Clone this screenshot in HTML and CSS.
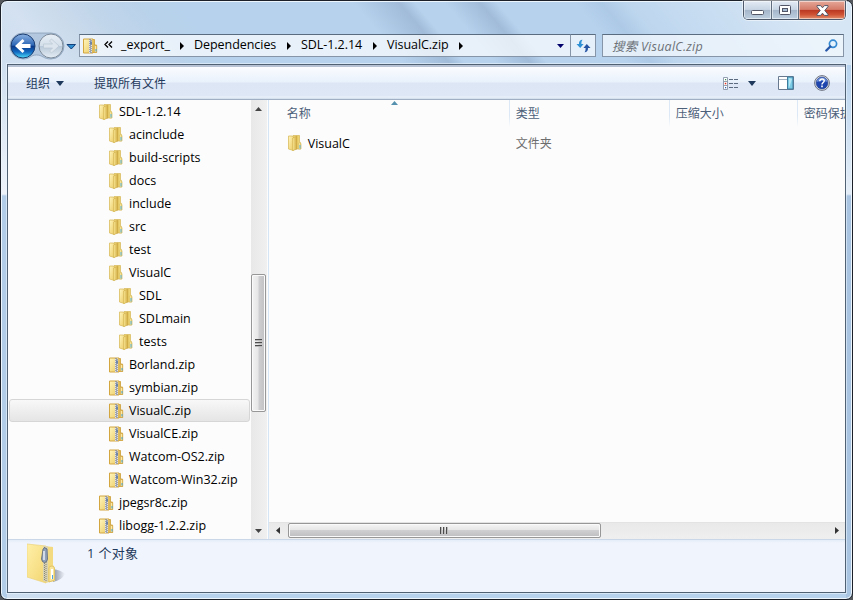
FILE: index.html
```html
<!DOCTYPE html>
<html lang="zh-CN">
<head>
  <meta charset="UTF-8">
  <meta name="viewport" content="width=device-width, initial-scale=1.0">
  <title>VisualC.zip</title>
  <link rel="stylesheet" href="styles.css">
</head>
<body>
  <!-- Shared icons -->
  <svg class="defs" width="0" height="0">
    <defs>
      <linearGradient id="gold" x1="0" y1="0" x2="1" y2="1">
        <stop offset="0" stop-color="#fff6bd"/>
        <stop offset="1" stop-color="#ecca62"/>
      </linearGradient>
      <linearGradient id="goldDark" x1="0" y1="0" x2="1" y2="0">
        <stop offset="0" stop-color="#fae793"/>
        <stop offset="1" stop-color="#cfa942"/>
      </linearGradient>
      <linearGradient id="blueBall" x1="0" y1="0" x2="0" y2="1">
        <stop offset="0" stop-color="#8bb2e2"/>
        <stop offset="0.47" stop-color="#2c66b5"/>
        <stop offset="0.5" stop-color="#0a3686"/>
        <stop offset="0.75" stop-color="#126bc2"/>
        <stop offset="1" stop-color="#4fe0fa"/>
      </linearGradient>
      <linearGradient id="grayBall" x1="0" y1="0" x2="0" y2="1">
        <stop offset="0" stop-color="#e9eff6"/>
        <stop offset="0.48" stop-color="#d3dfea"/>
        <stop offset="0.5" stop-color="#b8c8d8"/>
        <stop offset="1" stop-color="#e4edf5"/>
      </linearGradient>
    </defs>
    <symbol id="folder" viewBox="0 0 15 16">
      <path d="M5 .5h6.500v7l1.500 1v5.500H5z" fill="#eed373" stroke="#d6b75a" stroke-width=".7"/>
      <path d="M.5 1H4l1.500 1v13.500L.5 14z" fill="url(#gold)" stroke="#d9bc60" stroke-width=".8"/>
      <path d="M4.500 3L9 1v13l-4.500 1.700z" fill="url(#goldDark)" stroke="#c9a640" stroke-width=".5"/>
      <path d="M10.500 8l2-.7v6.700h-2z" fill="#f5e397" stroke="#d9bd62" stroke-width=".6"/>
      <path d="M11.500 10h1v3.500h-1z" fill="#54b4e6"/>
    </symbol>
    <symbol id="zip" viewBox="0 0 15 16">
      <path d="M8 1.500h3.500V7h2v7.500H8z" fill="#efd476" stroke="#c99b34" stroke-width=".8"/>
      <path d="M.5 1H10v14H.5z" fill="url(#gold)" stroke="#d3a640"/>
      <path d="M6 1.500h3V15H6z" fill="#dfe1e6"/>
      <path d="M7 1v14" stroke="#5c6474" stroke-width="1" stroke-dasharray="1 1"/>
      <path d="M8 2v13" stroke="#5c6474" stroke-width="1" stroke-dasharray="1 1"/>
      <path d="M7 3.500h2v3H7z" fill="#6e86a8"/>
      <path d="M11.300 7.500h2.400v7h-2.400z" fill="#fae9a7" stroke="#d1a544" stroke-width=".8"/>
      <path d="M12.500 11h1v2.500h-1z" fill="#3fa0d8"/>
    </symbol>
  </svg>

  <div class="window">
    <div class="titlebar">
      <div class="controls">
        <button class="control"><svg width="13" height="5"><rect x=".5" y=".5" width="12" height="4" rx="1" fill="#fff" stroke="#535666"/></svg></button>
        <button class="control control-max"><svg width="13" height="11"><rect x=".5" y=".5" width="11" height="9" rx="1" fill="#fff" stroke="#535666"/><rect x="3.500" y="3.500" width="5" height="3" fill="#a5bad3" stroke="#535666"/></svg></button>
        <button class="control control-close"><svg width="13" height="11" viewBox="0 0 13 11"><path d="M1 .6h3.600L6.500 2.800 8.400.6H12v1L8.800 5.500 12 9.400v1H8.400L6.500 8.200 4.600 10.400H1v-1L4.200 5.500 1 1.600z" fill="#fff" stroke="#535666"/></svg></button>
      </div>
    </div>

    <div class="nav">
      <svg class="travel" width="70" height="28" viewBox="0 0 70 28">
        <path d="M14 1h28a13 13 0 0 1 0 26c-8 0-8-4-14.500-4S22 27 14 27A13 13 0 0 1 14 1z" fill="#b3c8de" stroke="#8299b2" stroke-opacity=".7"/>
        <circle cx="14" cy="14" r="12" fill="url(#blueBall)" stroke="#1c3d71"/>
        <path d="M6 14L13.500 7l2 2-3 3H21.500v4H12.500l3 3-2 2z" fill="#fff"/>
        <circle cx="42" cy="14" r="12" fill="url(#grayBall)" stroke="#7d8a9a"/>
        <path d="M50 14L42.500 7l-2 2 3 3H34.500v4H43.500l-3 3 2 2z" fill="#dce5ee" stroke="#b9c6d3" stroke-width=".7"/>
        <path d="M58 12.500h8.500l-4.200 4.500z" fill="#2e8ed0" stroke="#16407a"/>
      </svg>
      <div class="address">
        <svg class="address-icon" width="15" height="16"><use href="#zip"/></svg>
        <svg class="chevrons" width="9" height="7" viewBox="0 0 9 7"><path d="M4 .5l-3 3 3 3M8 .5l-3 3 3 3" fill="none" stroke="#000" stroke-width="1.300"/></svg>
        <span class="crumb crumb-export">_export_</span>
        <span class="crumb crumb-deps">Dependencies</span>
        <span class="crumb crumb-sdl">SDL-1.2.14</span>
        <span class="crumb crumb-zip">VisualC.zip</span>
        <svg class="address-drop" width="7" height="4"><path d="M0 0h7L3.500 4z" fill="#00006b"/></svg>
      </div>
      <div class="refresh">
        <svg width="15" height="14" viewBox="0 0 15 14"><path d="M6.500 .7C4 .8 2.800 2.500 3 5H.5L4.200 9 7.600 5H5.400C5.400 3 5.600 1.900 6.500.7z" fill="#2f91d5"/><path d="M8.500 13.300c2.500-.1 3.700-1.800 3.500-4.300h2.500L10.800 5 7.400 9h2.200c0 2-.2 3.100-1.100 4.300z" fill="#2755a4"/></svg>
      </div>
      <div class="search">
        <span>搜索 VisualC.zip</span>
        <svg width="13" height="13" viewBox="0 0 13 13"><circle cx="8" cy="4.800" r="3.600" fill="#e4f3fd" stroke="#3489d0" stroke-width="1.700"/><path d="M5.300 7.500L1.300 11.500" stroke="#2858a8" stroke-width="2.300" stroke-linecap="round"/></svg>
      </div>
    </div>

    <div class="client">
      <div class="toolbar">
        <span class="tool-organize">组织</span>
        <svg class="tool-arrow" width="8" height="5"><path d="M0 0h8L4 5z" fill="#1e395b"/></svg>
        <span class="tool-extract">提取所有文件</span>
        <div class="tool-icons">
          <svg class="icon-view" width="15" height="13" viewBox="0 0 15 13">
            <path d="M.5 .5h4v12h-4zM.5 4.500h4M.5 8.500h4" fill="#fff" stroke="#8996a8" stroke-width=".9"/>
            <path d="M2 2h1.200v1.200H2z" fill="#3b8a58"/><path d="M1.800 5.800h1.500v1.500H1.800z" fill="#e02d1d"/><path d="M2 10h1.200v1.200H2z" fill="#2c5eb0"/>
            <path d="M6 2.500h4M11 2.500h4M6 6.500h4M11 6.500h4M6 10.500h4M11 10.500h4" stroke="#5d6b80"/>
          </svg>
          <svg class="icon-view-arrow" width="8" height="5"><path d="M0 0h8L4 5z" fill="#1e395b"/></svg>
          <svg class="icon-preview" width="16" height="14" viewBox="0 0 16 14"><path d="M.5 .5h15v13H.5z" fill="#fff" stroke="#66798f"/><path d="M1 3.500h9" stroke="#a4b1c0"/><path d="M9.500 1H15v12H9.500z" fill="#7ccbe5" stroke="#3f7b9d"/><path d="M11 2l3 1-3 9z" fill="#b7e7f4"/></svg>
          <svg class="icon-help" width="16" height="16" viewBox="0 0 16 16"><circle cx="8" cy="8" r="7.400" fill="#dfe4ec" stroke="#6d7280"/><circle cx="8" cy="8" r="5.900" fill="#1e46ae" stroke="#253e80" stroke-width=".6"/><path d="M2.500 7A5.600 5.600 0 0 1 13.500 7q-5-2-11 0z" fill="#668bd6"/><path d="M5.800 6.300c0-3.300 4.700-2.900 4.400-.3C10 7.600 8 7.600 8 9.500" fill="none" stroke="#fff" stroke-width="1.500"/><path d="M7.200 10.600h1.600v1.600H7.200z" fill="#fff"/></svg>
        </div>
      </div>

      <div class="content">
        <div class="tree">
          <div class="node"><svg><use href="#folder"/></svg><span>SDL-1.2.14</span></div>
          <div class="node level-2"><svg><use href="#folder"/></svg><span>acinclude</span></div>
          <div class="node level-2"><svg><use href="#folder"/></svg><span>build-scripts</span></div>
          <div class="node level-2"><svg><use href="#folder"/></svg><span>docs</span></div>
          <div class="node level-2"><svg><use href="#folder"/></svg><span>include</span></div>
          <div class="node level-2"><svg><use href="#folder"/></svg><span>src</span></div>
          <div class="node level-2"><svg><use href="#folder"/></svg><span>test</span></div>
          <div class="node level-2"><svg><use href="#folder"/></svg><span>VisualC</span></div>
          <div class="node level-3"><svg><use href="#folder"/></svg><span>SDL</span></div>
          <div class="node level-3"><svg><use href="#folder"/></svg><span>SDLmain</span></div>
          <div class="node level-3"><svg><use href="#folder"/></svg><span>tests</span></div>
          <div class="node level-2"><svg><use href="#zip"/></svg><span>Borland.zip</span></div>
          <div class="node level-2"><svg><use href="#zip"/></svg><span>symbian.zip</span></div>
          <div class="node level-2 selected"><svg><use href="#zip"/></svg><span>VisualC.zip</span></div>
          <div class="node level-2"><svg><use href="#zip"/></svg><span>VisualCE.zip</span></div>
          <div class="node level-2"><svg><use href="#zip"/></svg><span>Watcom-OS2.zip</span></div>
          <div class="node level-2"><svg><use href="#zip"/></svg><span>Watcom-Win32.zip</span></div>
          <div class="node"><svg><use href="#zip"/></svg><span>jpegsr8c.zip</span></div>
          <div class="node"><svg><use href="#zip"/></svg><span>libogg-1.2.2.zip</span></div>
        </div>

        <div class="vscroll">
          <svg class="vscroll-up" width="7" height="4"><path d="M0 4h7L3.500 0z" fill="#444"/></svg>
          <div class="vthumb"><i></i><i></i><i></i></div>
          <svg class="vscroll-down" width="7" height="4"><path d="M0 0h7L3.500 4z" fill="#444"/></svg>
        </div>

        <div class="files">
          <div class="columns">
            <div class="column col-name">名称<svg class="sort" width="7" height="4"><path d="M0 4h7L3.500 0z" fill="#5590ae"/></svg></div>
            <div class="column col-type">类型</div>
            <div class="column col-size">压缩大小</div>
            <div class="column col-pass">密码保护</div>
          </div>
          <div class="file">
            <div class="file-name"><svg width="15" height="16"><use href="#folder"/></svg><span>VisualC</span></div>
            <div class="file-type">文件夹</div>
          </div>
          <div class="hscroll">
            <svg class="hscroll-left" width="4" height="7"><path d="M4 0v7L0 3.500z" fill="#333"/></svg>
            <div class="hthumb"><i></i><i></i><i></i></div>
            <svg class="hscroll-right" width="4" height="7"><path d="M0 0v7l4-3.500z" fill="#333"/></svg>
          </div>
        </div>
      </div>

      <div class="details">
        <svg class="details-icon" width="40" height="42" viewBox="0 0 40 42">
          <defs>
            <linearGradient id="shade" x1="0" y1="0" x2="1" y2="0"><stop offset="0" stop-color="#8d95a3"/><stop offset="1" stop-color="#8d95a3" stop-opacity="0"/></linearGradient>
            <linearGradient id="body" x1="0" y1="0" x2="1" y2="1"><stop offset="0" stop-color="#fff0a8"/><stop offset="1" stop-color="#f2d571"/></linearGradient>
          </defs>
          <path d="M26 26q8 1 12 5-3 6-12 8z" fill="url(#shade)"/>
          <path d="M17 3l9 1v18l2 3v13l-10 2z" fill="#f3da80"/>
          <path d="M0 1l19 2v37L0 34z" fill="url(#body)" stroke="#edd37b" stroke-width=".7"/>
          <path d="M16 3l5 .4V39l-5-1z" fill="#d9d2b0"/>
          <path d="M17.500 4v34" stroke="#85847a" stroke-dasharray="1 1"/>
          <path d="M19 5v34" stroke="#85847a" stroke-dasharray="1 1"/>
          <path d="M16 6q1.500-2.500 4 0l.5 10q-.5 3.500-3 3.500t-3-3.500z" fill="#8fa1ba" stroke="#5c6675" stroke-width=".8"/>
          <path d="M17 8v9" stroke="#e9f0f8" stroke-width="1.500"/>
          <path d="M22 25q0-2 3-2 2.500 0 2.500 3v11l-5.500 2z" fill="#f9e59b" stroke="#d8b757" stroke-width=".7"/>
          <path d="M25 26v10" stroke="#fff" stroke-width="2"/>
          <path d="M25.500 32v4" stroke="#4fa7de"/>
        </svg>
        <span class="details-count">1 个对象</span>
      </div>
    </div>
  </div>
</body>
</html>
```
FILE: styles.css
```css
* {
  box-sizing: border-box;
}
body {
  margin: 0;
  background: #55585c;
  font-family: "Open Sans", "Noto Sans CJK SC", sans-serif;
  font-size: 12.5px;
  color: #000;
  overflow: hidden;
}
svg {
  display: block;
  flex: none;
}
.defs {
  position: absolute;
}
.window {
  width: 853px;
  height: 600px;
  padding: 0 6px 6px;
  border: 1px solid #1c2129;
  border-radius: 7px;
  box-shadow: inset 0 0 0 1px #eef6fd;
  background:
    linear-gradient(rgba(240, 245, 251, 0) 60px, #eef3fa 193px, #b1cde8 195px) 0 0 / 6px 100% no-repeat,
    linear-gradient(rgba(240, 245, 251, 0) 60px, #e4edf7 193px, #a9c4e0 195px) 100% 0 / 6px 100% no-repeat,
    linear-gradient(50deg, transparent 310px, rgba(135, 160, 190, .45) 345px, transparent 357px, transparent 380px, rgba(135, 160, 190, .45) 407px, transparent 420px, transparent 480px, rgba(135, 165, 200, .2) 500px, rgba(255, 255, 255, .1) 520px, rgba(255, 255, 255, .45) 650px) 0 0 / 100% 64px no-repeat,
    linear-gradient(50deg, #cfdff0 0, #d3e1f1 45px, #cbdbec 75px, #c0d5ea 110px, #b8d2eb 150px, #b6d2ed 200px) 0 0 / 100% 64px no-repeat,
    linear-gradient(90deg, #cfdff0 0, #b6d2ed 200px);
}
.titlebar {
  display: flex;
  justify-content: flex-end;
  height: 32px;
}
.controls {
  display: flex;
  width: 103px;
  height: 19px;
  border: 1px solid #4d596a;
  border-top: 0;
  border-radius: 0 0 5px 5px;
  box-shadow: 0 0 0 1px rgba(255, 255, 255, .5);
  overflow: hidden;
}
.control {
  display: flex;
  align-items: center;
  justify-content: center;
  width: 28px;
  padding: 0;
  border: 0;
  border-right: 1px solid #606d7e;
  background: linear-gradient(#e3ebf5 0, #c8d5e4 47%, #a4b5ca 50%, #bfcfe1 100%);
  box-shadow: inset 0 0 0 1px rgba(255, 255, 255, .5);
}
.control:first-child {
  padding-top: 5px;
}
.control-max {
  width: 27px;
}
.control-close {
  flex: 1;
  border-right: 0;
  background: linear-gradient(#e6a899 0, #d47b68 47%, #b93520 50%, #cf5235 75%, #e2906c 100%);
}
.nav {
  display: flex;
  align-items: flex-start;
  height: 31px;
  padding: 1px 2px 0 2px;
}
.travel {
  margin: -2px 0 0 0;
}
.address {
  display: flex;
  align-items: center;
  width: 492px;
  height: 23px;
  border: 1px solid #8696a8;
  border-top-color: #596c80;
  background: rgba(248, 251, 254, .75);
}
.address-icon {
  margin-left: 3px;
}
.chevrons {
  margin: -2px 0 0 6px;
}
.crumb {
  position: relative;
  height: 20px;
  line-height: 18px;
  letter-spacing: -.05px;
  white-space: nowrap;
}
.crumb::after {
  content: "";
  position: absolute;
  right: 1px;
  top: 6px;
  border: 4px solid transparent;
  border-left-color: #000;
  border-right: 0;
}
.crumb-export {
  width: 64px;
  margin-left: 8px;
}
.crumb-deps {
  width: 98px;
  margin-left: 9px;
}
.crumb-sdl {
  width: 77px;
  margin-left: 9px;
}
.crumb-zip {
  width: 77px;
  margin-left: 9px;
}
.address-drop {
  margin: 0 6px 0 auto;
}
.refresh {
  display: flex;
  align-items: center;
  justify-content: center;
  width: 25px;
  height: 23px;
  border: 1px solid #8696a8;
  border-top-color: #596c80;
  border-left: 0;
  background: rgba(242, 247, 252, .8);
}
.search {
  display: flex;
  align-items: center;
  justify-content: space-between;
  flex: 1;
  height: 23px;
  margin-left: 6px;
  padding: 0 5px 0 9px;
  border: 1px solid #8696a8;
  border-top-color: #596c80;
  background: rgba(240, 246, 252, .8);
  font-style: italic;
  letter-spacing: .25px;
  color: #6d7278;
}
.search span {
  margin-top: -1px;
}
.client {
  display: flex;
  flex-direction: column;
  width: 839px;
  height: 529px;
  border: 1px solid #4f6173;
  background: #fcfcfc;
  box-shadow: 0 0 0 1px rgba(235, 245, 255, .6);
}
.toolbar {
  display: flex;
  align-items: center;
  height: 35px;
  padding: 0 15px 0 18px;
  border-top: 2px solid #b7c3d4;
  border-bottom: 1px solid #a0afc3;
  background: linear-gradient(#fafcff 0, #e9f1fb 47%, #dce6f4 50%, #dde7f5 90%, #eaf2fb 94%, #cfdcea 100%);
  font-size: 12px;
  color: #1e395b;
}
.tool-arrow {
  margin: 0 0 0 6px;
}
.tool-extract {
  margin-left: 30px;
}
.tool-icons {
  display: flex;
  align-items: center;
  margin: 0 0 0 auto;
}
.icon-view-arrow {
  margin-left: 10px;
}
.icon-preview {
  margin-left: 22px;
}
.icon-help {
  margin-left: 20px;
}
.content {
  display: flex;
  height: 439px;
}
.tree {
  width: 243px;
  overflow: hidden;
}
.node {
  display: flex;
  align-items: center;
  width: 241px;
  height: 23px;
  margin-left: 1px;
  padding-left: 90px;
  border: 1px solid transparent;
  border-left: 0;
  white-space: nowrap;
}
.node svg {
  width: 15px;
  height: 16px;
}
.node span {
  margin-left: 5px;
  line-height: 20px;
}
.level-2 {
  padding-left: 100px;
}
.level-3 {
  padding-left: 110px;
}
.selected {
  border: 1px solid #d6d6d6;
  border-radius: 3px;
  padding-left: 99px;
  background: linear-gradient(#f8f8f8, #e5e5e5);
}
.vscroll {
  display: flex;
  flex-direction: column;
  align-items: center;
  width: 16px;
  background: linear-gradient(90deg, #e8e8e8, #f0f0f0);
}
.vscroll-up {
  margin: 7px 0 163px;
}
.vthumb {
  display: flex;
  flex-direction: column;
  align-items: center;
  justify-content: center;
  gap: 1px;
  width: 15px;
  height: 138px;
  border: 1px solid #979797;
  border-radius: 2px;
  box-shadow: inset 0 0 0 1px #fafafa;
  background: linear-gradient(90deg, #f3f3f3 0, #e6e6e6 48%, #cfcfd2 52%, #c1c1c4 100%);
}
.vthumb i {
  width: 7px;
  height: 2px;
  border-top: 1px solid #4c4c4c;
  background: #b9b9b9;
}
.vscroll-down {
  margin: auto 0 6px;
}
.files {
  display: flex;
  flex-direction: column;
  width: 578px;
  margin-left: 1px;
  border-left: 1px solid #d6e5f5;
  overflow: hidden;
}
.columns {
  display: flex;
  height: 26px;
  font-size: 12px;
  line-height: 27px;
  color: #4c607a;
}
.column {
  position: relative;
  flex: none;
  padding-left: 6px;
  border-right: 1px solid;
  border-image: linear-gradient(#dce8f5 60%, #fcfcfc) 1;
  border-width: 0 1px 0 0;
  white-space: nowrap;
}
.col-name {
  width: 241px;
  padding-left: 18px;
}
.col-type {
  width: 160px;
}
.col-size {
  width: 128px;
}
.col-pass {
  width: 80px;
  border: 0;
}
.sort {
  position: absolute;
  left: 122px;
  top: 1px;
}
.file {
  display: flex;
  align-items: center;
  height: 22px;
  margin-top: 6px;
}
.file-name {
  display: flex;
  align-items: center;
  width: 247px;
  padding-left: 19px;
}
.file-name span {
  margin-left: 5px;
}
.file-type {
  font-size: 12px;
  color: #6d6d6d;
}
.hscroll {
  display: flex;
  align-items: flex-start;
  height: 17px;
  margin-top: auto;
  border-top: 1px solid #e3e3e3;
  background: linear-gradient(#e9e9e9, #efefef);
}
.hscroll-left {
  margin: 4px 8px 0 7px;
}
.hthumb {
  display: flex;
  align-items: center;
  justify-content: center;
  gap: 1px;
  width: 313px;
  height: 15px;
  border: 1px solid #979797;
  border-radius: 2px;
  box-shadow: inset 0 0 0 1px #fafafa;
  background: linear-gradient(#f5f5f5 0, #e6e6e6 47%, #cfcfd2 50%, #bebec1 100%);
}
.hthumb i {
  width: 2px;
  height: 7px;
  border-left: 1px solid #4c4c4c;
  background: #b9b9b9;
}
.hscroll-right {
  margin: 4px 6px 0 auto;
}
.details {
  display: flex;
  flex: 1;
  padding-left: 19px;
  border-top: 1px solid #c9d7e8;
  background: linear-gradient(#e4edf8 0, #f0f4fc 3px);
  color: #1e395b;
}
.details-icon {
  margin-top: 3px;
}
.details-count {
  margin: 4px 0 0 20px;
  font-size: 13px;
  line-height: 18px;
  letter-spacing: .3px;
}
```
